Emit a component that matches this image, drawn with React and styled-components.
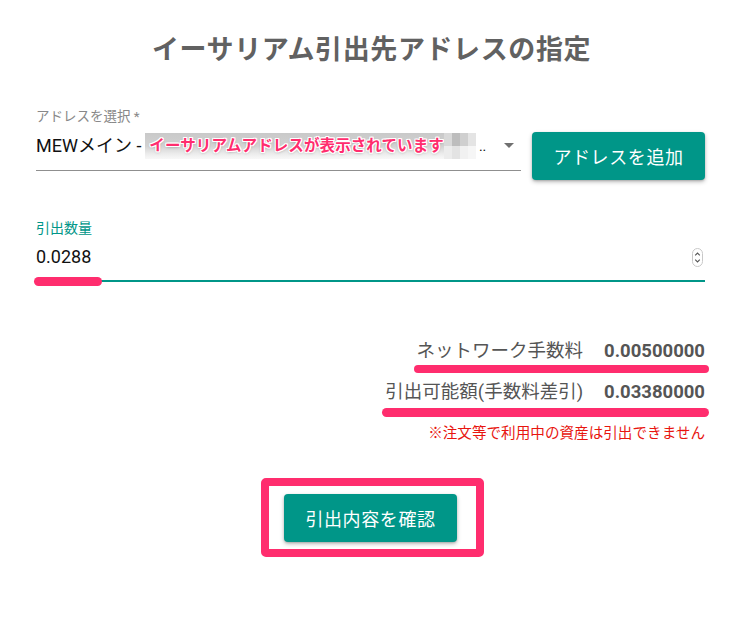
import React from "react";
import styled, { createGlobalStyle } from "styled-components";

const Global = createGlobalStyle`
  html, body { margin: 0; padding: 0; background: #fff; }
  body { font-family: Roboto, "Noto Sans CJK JP", "Noto Sans", sans-serif; }
`;

const PINK = "#ff2d6e";
const TEAL = "#009688";

const Page = styled.div`
  width: 750px;
  height: 626px;
  box-sizing: border-box;
  padding: 35px 45px 0 36px;
  display: flex;
  flex-direction: column;
`;

const Title = styled.h1`
  margin: 0;
  font-size: 27px;
  line-height: 30px;
  font-weight: 700;
  letter-spacing: 0.6px;
  color: #616161;
  text-align: center;
  padding-left: 2px;
`;

const AddressRow = styled.div`
  margin-top: 43px;
  display: flex;
  align-items: flex-start;
  gap: 11px;
`;

const Field = styled.div`
  flex: 1;
  display: flex;
  flex-direction: column;
  position: relative;
`;

const Label = styled.label`
  font-size: ${(p) => p.$size || 13.5}px;
  line-height: 16px;
  color: ${(p) => (p.$active ? TEAL : "#888")};
`;

const SelectBox = styled.div`
  margin-top: 4px;
  display: flex;
  align-items: center;
  padding: 5px 7px 11px 0;
  border-bottom: 1px solid #8f8f8f;
  font-size: 18px;
  line-height: 24px;
  color: #111;
  white-space: nowrap;
`;

const Mosaic = styled.span`
  display: inline-flex;
  align-items: center;
  height: 26px;
  margin-left: 4px;
  padding-left: 4px;
  background: linear-gradient(to bottom, #c9c9c9 0%, #d2d2d2 50%, #ececec 80%, #f8f8f8 100%);
`;

const Redacted = styled.span`
  font-size: 15.5px;
  font-weight: 700;
  color: ${PINK};
  letter-spacing: 0.1px;
  text-shadow: 1px 0 0 #fff, -1px 0 0 #fff, 0 1px 0 #fff, 0 -1px 0 #fff,
    1px 1px 0 #fff, -1px -1px 0 #fff, 1px -1px 0 #fff, -1px 1px 0 #fff,
    0 1px 3px rgba(0, 0, 0, 0.35);
`;

const Pixel = styled.span`
  display: inline-block;
  width: 8px;
  height: 26px;
  background: linear-gradient(to bottom, ${(p) => p.$c} 0 50%, ${(p) => p.$d} 50% 100%);
`;

const Dots = styled.span`
  font-size: 14px;
  margin-left: 3px;
  flex: 1;
`;

const Caret = styled.span`
  width: 0;
  height: 0;
  border-left: 5.5px solid transparent;
  border-right: 5.5px solid transparent;
  border-top: 5.5px solid #707070;
  margin-bottom: 2px;
`;

const RaisedButton = styled.button`
  margin-top: ${(p) => p.$mt || 0}px;
  width: 173px;
  height: 48px;
  border: none;
  border-radius: 4px;
  background: ${TEAL};
  color: #fff;
  font-family: inherit;
  font-size: 18px;
  letter-spacing: 0.6px;
  box-shadow: 0 2px 4px rgba(0, 0, 0, 0.25), 0 1px 2px rgba(0, 0, 0, 0.15);
  cursor: pointer;
`;

const AmountField = styled(Field)`
  margin-top: 40px;
  flex: none;
`;

const AmountBox = styled.div`
  margin-top: 9px;
  display: flex;
  align-items: center;
  justify-content: space-between;
  padding: 0 2px 11px 0;
  border-bottom: 2px solid ${TEAL};
  font-size: 18px;
  line-height: 24px;
  color: #111;
`;

const Marker = styled.div`
  position: absolute;
  left: -2px;
  bottom: -4px;
  width: 68px;
  height: 9px;
  border-radius: 5px;
  background: ${PINK};
`;

const Summary = styled.div`
  margin-top: 57px;
  display: flex;
  flex-direction: column;
  align-items: flex-end;
`;

const SummaryItem = styled.div`
  display: flex;
  flex-direction: column;
  margin-top: ${(p) => p.$mt || 0}px;
`;

const SummaryLine = styled.div`
  display: flex;
  justify-content: flex-end;
  gap: 21px;
  font-size: 18.5px;
  line-height: 24px;
  color: #555;
`;

const Value = styled.span`
  font-weight: 700;
`;

const Highlight = styled.div`
  margin: ${(p) => p.$mt}px -4px 0 -3px;
  height: ${(p) => p.$h}px;
  border-radius: 5px;
  background: ${PINK};
`;

const Note = styled.div`
  margin-top: 7px;
  font-size: 14.6px;
  line-height: 18px;
  color: #e8150f;
`;

const ConfirmFrame = styled.div`
  margin: 36px 0 0 225px;
  width: 223px;
  height: 79px;
  box-sizing: border-box;
  border: 8px solid ${PINK};
  border-radius: 5px;
  display: flex;
  align-items: center;
  padding-left: 15px;
`;

const Spinner = () => (
  <svg width="11" height="19" viewBox="0 0 11 19">
    <rect x="0.5" y="0.5" width="10" height="18" rx="5" fill="#fff" stroke="#c8c8c8" />
    <path d="M3.2 7.3 L5.5 5 L7.8 7.3" fill="none" stroke="#555" strokeWidth="1.1" />
    <path d="M3.2 11.7 L5.5 14 L7.8 11.7" fill="none" stroke="#555" strokeWidth="1.1" />
  </svg>
);

export default function App() {
  return (
    <>
      <Global />
      <Page>
        <Title>イーサリアム引出先アドレスの指定</Title>

        <AddressRow>
          <Field>
            <Label>アドレスを選択 *</Label>
            <SelectBox>
              MEWメイン -
              <Mosaic>
                <Redacted>イーサリアムアドレスが表示されています</Redacted>
                <Pixel $c="#d9d9d9" $d="#ececec" />
                <Pixel $c="#bdbdbd" $d="#e3e3e3" />
                <Pixel $c="#cfcfcf" $d="#f1f1f1" />
                <Pixel $c="#e4e4e4" $d="#f6f6f6" />
              </Mosaic>
              <Dots>..</Dots>
              <Caret />
            </SelectBox>
          </Field>
          <RaisedButton $mt={24}>アドレスを追加</RaisedButton>
        </AddressRow>

        <AmountField>
          <Label $active $size={14}>引出数量</Label>
          <AmountBox>
            0.0288
            <Spinner />
          </AmountBox>
          <Marker />
        </AmountField>

        <Summary>
          <SummaryItem>
            <SummaryLine>
              <span>ネットワーク手数料</span>
              <Value>0.00500000</Value>
            </SummaryLine>
            <Highlight $mt={2} $h={8} />
          </SummaryItem>
          <SummaryItem $mt={7}>
            <SummaryLine>
              <span>引出可能額(手数料差引)</span>
              <Value>0.03380000</Value>
            </SummaryLine>
            <Highlight $mt={4} $h={9} />
          </SummaryItem>
          <Note>※注文等で利用中の資産は引出できません</Note>
        </Summary>

        <ConfirmFrame>
          <RaisedButton>引出内容を確認</RaisedButton>
        </ConfirmFrame>
      </Page>
    </>
  );
}
